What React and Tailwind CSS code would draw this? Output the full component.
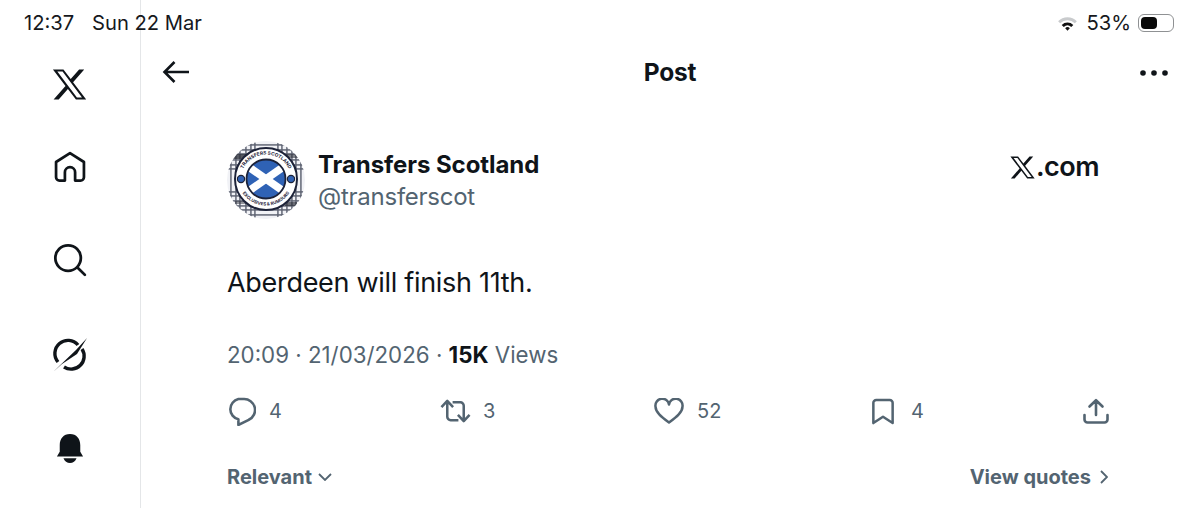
const X = ({ className }) => (
  <svg viewBox="0 0 24 24" className={className} fill="currentColor" fillRule="evenodd">
    <path d="M18.244 2.25h3.308l-7.227 8.26 8.502 11.24H16.17l-5.214-6.817L4.99 21.75H1.68l7.73-8.835L1.254 2.25H8.08l4.713 6.231zM4.1 3.5H7.5L20.1 20.5H16.8z" />
  </svg>
);

const Avatar = () => {
  const vs = [3, 8, 12, 18, 23, 27, 50, 54, 59, 64, 68, 73];
  return (
    <svg viewBox="0 0 78 78" className="w-[78px] h-[78px] shrink-0">
      <defs>
        <clipPath id="av"><circle cx="39" cy="39" r="39" /></clipPath>
        <clipPath id="inner"><circle cx="39" cy="38" r="19.5" /></clipPath>
      </defs>
      <g clipPath="url(#av)">
        <rect width="78" height="78" fill="#f1f2f6" />
        {vs.map((v) => (
          <g key={v}>
            <rect x={v} y="0" width="1.8" height="78" fill="#5d6170" opacity="0.8" />
            <rect x="0" y={v} width="78" height="1.8" fill="#5d6170" opacity="0.8" />
          </g>
        ))}
        <rect x="5" y="13" width="16" height="5" fill="#2f323c" opacity="0.8" />
        <rect x="58" y="13" width="14" height="4" fill="#2f323c" opacity="0.6" />
        <rect x="58" y="61" width="12" height="4" fill="#2f323c" opacity="0.7" />
        <rect x="8" y="60" width="12" height="3" fill="#2f323c" opacity="0.5" />
      </g>
      <circle cx="39" cy="38" r="31" fill="#fff" stroke="#1c2238" strokeWidth="2" />
      <circle cx="39" cy="38" r="19.5" fill="#2f62b5" />
      <g clipPath="url(#inner)">
        <path d="M15 26 L20 20 L63 50 L58 56 Z" fill="#fff" />
        <path d="M63 26 L58 20 L15 50 L20 56 Z" fill="#fff" />
      </g>
      <circle cx="39" cy="38" r="19.5" fill="none" stroke="#1c2238" strokeWidth="1.8" />
      <circle cx="14" cy="38" r="3.6" fill="#2f62b5" stroke="#1c2238" strokeWidth="1.2" />
      <circle cx="64" cy="38" r="3.6" fill="#2f62b5" stroke="#1c2238" strokeWidth="1.2" />
      <path id="t1" d="M14 34 A25.5 25.5 0 0 1 64 34" fill="none" />
      <path id="t2" d="M12 44 A28 28 0 0 0 66 44" fill="none" />
      <text fontSize="4.8" fontWeight="700" fill="#1c2238" fontFamily="Inter, sans-serif">
        <textPath href="#t1" startOffset="50%" textAnchor="middle">TRANSFERS SCOTLAND</textPath>
      </text>
      <text fontSize="4.4" fontWeight="700" fill="#1c2238" fontFamily="Inter, sans-serif">
        <textPath href="#t2" startOffset="50%" textAnchor="middle">EXCLUSIVES &amp; RUMOURS</textPath>
      </text>
    </svg>
  );
};

const Stat = ({ icon, n, className }) => (
  <div className={`flex items-center ${className}`}>
    {icon}
    {n && <span className="text-[20px] leading-none text-[#536471]">{n}</span>}
  </div>
);

const gray = "text-[#536471]";

export default function App() {
  return (
    <div className="relative w-[1200px] h-[508px] overflow-hidden bg-white text-[#0f1419] flex font-['Inter','Liberation_Sans',sans-serif]">
      <div className="absolute left-[24px] top-[12px] flex text-[20.2px] leading-[22px] text-[#16181c]">
        <span className="w-[68px]">12:37</span>
        <span>Sun 22 Mar</span>
      </div>
      <div className="absolute right-[26px] top-[12px] flex items-center text-[#16181c]">
        <svg viewBox="0 0 22 16" className="w-[21px] h-[15px] mr-[8px] mt-[1px]">
          <path d="M1 5.5 A14 14 0 0 1 21 5.5 L18.8 7.8 A11 11 0 0 0 3.2 7.8 Z" fill="#c9cbcd" />
          <path d="M4.8 9.5 A9 9 0 0 1 17.2 9.5 L15 11.7 A6 6 0 0 0 7 11.7 Z" fill="#111" />
          <path d="M8.5 13 A3.6 3.6 0 0 1 13.5 13 L11 15.6 Z" fill="#111" />
        </svg>
        <span className="text-[20.2px] leading-[22px] mr-[7px]">53%</span>
        <div className="w-[36px] h-[18px] rounded-[6px] border border-[#8f9193] p-[2px]">
          <div className="w-[16px] h-full rounded-[4px] bg-[#0a0a0a]" />
        </div>
      </div>

      <aside className="w-[141px] shrink-0 border-r border-[#e4e6e8] flex flex-col items-center pr-[1px] pt-[64px]">
        <X className="w-[37px] h-[37px] text-[#0f1419] my-[1.5px]" />
        <svg viewBox="0 0 30 30" className="w-[34px] h-[34px] mt-[46px]" fill="none" stroke="#0f1419" strokeWidth="2.4" strokeLinejoin="round">
          <path d="M15 2.8 L27.3 10.6 V24 A3 3 0 0 1 24.3 27 H19.5 V19.7 A4.5 4.5 0 0 0 10.5 19.7 V27 H5.7 A3 3 0 0 1 2.7 24 V10.6 Z" />
        </svg>
        <svg viewBox="0 0 32 32" className="w-[34px] h-[34px] mt-[59px]" fill="none" stroke="#0f1419" strokeWidth="2.6" strokeLinecap="round">
          <circle cx="14.2" cy="14.2" r="12" />
          <path d="M23 23 L30 30" />
        </svg>
        <svg viewBox="0 0 36 36" className="w-[36px] h-[36px] mt-[60px]" fill="none">
          <path d="M6 25 A13 13 0 0 1 26 8 M30 12 A13 13 0 0 1 12 30" stroke="#0f1419" strokeWidth="3.4" />
          <path d="M1 35 L24 13 L35 1 L25 17 L10 27 Z" fill="#0f1419" />
          <path d="M10 24 L26 9" stroke="#fff" strokeWidth="1.4" />
        </svg>
        <svg viewBox="0 0 30 32" className="w-[28px] h-[30px] mt-[60px]" fill="#0f1419">
          <path d="M15 1 C8 1 4 6 4 13 V20 L1 25 H29 L26 20 V13 C26 6 22 1 15 1 Z" />
          <path d="M8 27 H22 C21 30.5 18 32 15 32 C12 32 9 30.5 8 27 Z" />
        </svg>
      </aside>

      <main className="flex-1 flex flex-col">
        <header className="flex items-center h-[30px] mt-[57px] pl-[21px] pr-[32px] justify-between">
          <svg viewBox="0 0 28 24" className="w-[28px] h-[24px]" fill="none" stroke="#0f1419" strokeWidth="2.6">
            <path d="M27 12 H3 M12.5 2 L2.5 12 L12.5 22" />
          </svg>
          <span className="text-[24.5px] font-bold leading-none tracking-[-0.2px] pl-[10px]">Post</span>
          <svg viewBox="0 0 28 6" className="w-[28px] h-[6px] mt-[2px]" fill="#0f1419">
            <circle cx="3" cy="3" r="2.8" /><circle cx="14" cy="3" r="2.8" /><circle cx="25" cy="3" r="2.8" />
          </svg>
        </header>

        <div className="pl-[86px] pr-[100px] pt-[54px]">
          <div className="flex">
            <Avatar />
            <div className="ml-[13px] pt-[9px] flex-1">
              <div className="text-[24px] leading-[30px] font-bold tracking-[-0.07px]">Transfers Scotland</div>
              <div className={`text-[24px] leading-[30px] ${gray} tracking-[-0.25px] mt-[2px]`}>@transferscot</div>
            </div>
            <div className="flex items-center h-[30px] mt-[11px] mr-[1px] text-[27px] font-semibold tracking-[-0.5px]">
              <X className="w-[27px] h-[27px]" />
              <span>.com</span>
            </div>
          </div>

          <p className="text-[27px] leading-[34px] mt-[47px] tracking-[-0.3px]">Aberdeen will finish 11th.</p>

          <div className={`text-[22.3px] leading-[28px] mt-[41px] ${gray}`}>
            20:09 · 21/03/2026 · <span className="font-bold text-[#0f1419]">15K</span> Views
          </div>

          <div className="flex mt-[27px] h-[30px] items-center relative">
            <Stat className="w-[213px] gap-[13px]" n="4" icon={
              <svg viewBox="0 0 28 28" className="w-[29px] h-[29px]" fill="none" stroke="#536471" strokeWidth="2.5" strokeLinejoin="round">
                <path d="M11 2 H16 A10.5 10.5 0 0 1 21 22 L11 27 V21.5 A10 10 0 0 1 11 2 Z" />
              </svg>} />
            <Stat className="w-[214px] gap-[12px]" n="3" icon={
              <svg viewBox="0 0 32 26" className="w-[31px] h-[26px]" fill="none" stroke="#536471" strokeWidth="2.6" strokeLinejoin="round">
                <path d="M1.5 9 L7.5 2.5 L13.5 9 M7.5 3 V19 A3.5 3.5 0 0 0 11 22.5 H19 M13 4 H21 A3.5 3.5 0 0 1 24.5 7.5 V23 M18.5 17 L24.5 23.5 L30.5 17" />
              </svg>} />
            <Stat className="w-[217px] gap-[13px]" n="52" icon={
              <svg viewBox="0 0 30 26" className="w-[30px] h-[26px]" fill="none" stroke="#536471" strokeWidth="2.5" strokeLinejoin="round">
                <path d="M15 24.5 C7 18.5 1.5 14 1.5 8.5 A6.8 6.8 0 0 1 15 6.5 A6.8 6.8 0 0 1 28.5 8.5 C28.5 14 23 18.5 15 24.5 Z" />
              </svg>} />
            <Stat className="gap-[16px] flex-1" n="4" icon={
              <svg viewBox="0 0 24 28" className="w-[24px] h-[27px]" fill="none" stroke="#536471" strokeWidth="2.6" strokeLinejoin="round">
                <path d="M2 26 V5 A3 3 0 0 1 5 2 H19 A3 3 0 0 1 22 5 V26 L12 19.5 Z" />
              </svg>} />
            <svg viewBox="0 0 26 26" className="w-[26px] h-[26px] -mr-[9px]" fill="none" stroke="#536471" strokeWidth="2.6" strokeLinecap="round" strokeLinejoin="round">
              <path d="M13 17 V2.5 M6.5 8.5 L13 2.2 L19.5 8.5 M1.5 17 V21.5 A3 3 0 0 0 4.5 24.5 H21.5 A3 3 0 0 0 24.5 21.5 V17" />
            </svg>
          </div>

          <div className={`flex items-center justify-between mt-[38px] -mr-[8px] text-[20px] leading-[26px] font-bold ${gray}`}>
            <div className="flex items-center gap-[6px]">
              <span>Relevant</span>
              <svg viewBox="0 0 14 8" className="w-[14px] h-[8px]" fill="none" stroke="#536471" strokeWidth="1.8"><path d="M1 1 L7 7 L13 1" /></svg>
            </div>
            <div className="flex items-center gap-[9px]">
              <span>View quotes</span>
              <svg viewBox="0 0 8 14" className="w-[8px] h-[14px]" fill="none" stroke="#536471" strokeWidth="1.8"><path d="M1 1 L7 7 L1 13" /></svg>
            </div>
          </div>
        </div>
      </main>
    </div>
  );
}
